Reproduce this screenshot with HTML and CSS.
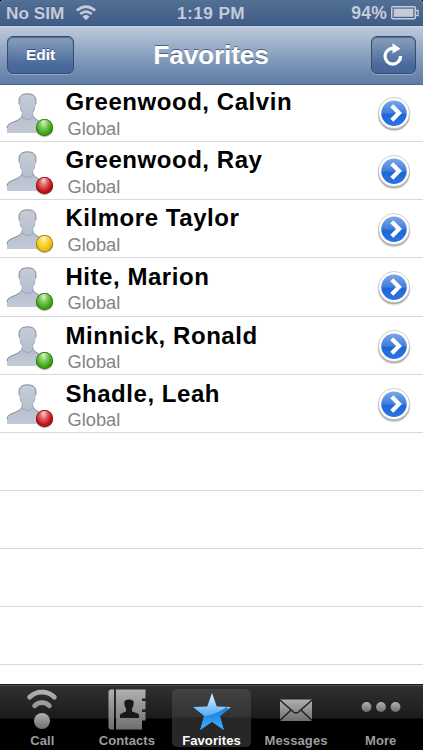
FILE: index.html
```
<!DOCTYPE html>
<html lang="en">
<head>
<meta charset="utf-8">
<title>Favorites</title>
<link rel="stylesheet" href="styles.css">
</head>
<body>
<svg class="defs" width="0" height="0" aria-hidden="true">
  <defs>
    <linearGradient id="body" x1="0" y1="0" x2="0" y2="1"><stop offset="0" stop-color="#c6ccd7"/><stop offset=".6" stop-color="#b7c0cf"/><stop offset="1" stop-color="#c3cad7"/></linearGradient>
    <linearGradient id="blue" x1="0" y1="0" x2="0" y2="1"><stop offset="0" stop-color="#7da7e9"/><stop offset=".5" stop-color="#3f7ddd"/><stop offset=".53" stop-color="#1e66d6"/><stop offset="1" stop-color="#2b74e4"/></linearGradient>
    <linearGradient id="gray" x1="0" y1="0" x2="0" y2="1"><stop offset="0" stop-color="#b0b0b0"/><stop offset="1" stop-color="#6f6f6f"/></linearGradient>
    <linearGradient id="callGray" gradientUnits="userSpaceOnUse" x1="0" y1="0" x2="0" y2="41"><stop offset="0" stop-color="#b5b5b5"/><stop offset="1" stop-color="#707070"/></linearGradient>
    <linearGradient id="star" x1="0" y1="0" x2="0" y2="1"><stop offset="0" stop-color="#e4f3ff"/><stop offset=".5" stop-color="#67b7f5"/><stop offset="1" stop-color="#2a9cf8"/></linearGradient>
    <linearGradient id="starLow" x1="0" y1="0" x2="0" y2="1"><stop offset="0" stop-color="#1578dc"/><stop offset="1" stop-color="#42b8ff"/></linearGradient>
    <clipPath id="starClip"><path d="M19 0 23.8 13.6 38 14 26.8 22.9 30.8 37 19 28.8 7.2 37 11.2 22.9 0 14 14.2 13.6Z"/></clipPath>
    <symbol id="person" viewBox="0 0 40 42">
      <path d="M1 40V35Q1 32 4 30.500L11 27.500Q14.500 26 15.700 23.500L16.500 19.500Q14.500 18 14.200 14.500Q12.700 13.500 13 11L13.200 6Q14 .8 21.500.8Q29 .8 29.800 6L30 11Q30.300 13.500 28.800 14.500Q28.500 18 26.500 19.500L27.300 23.500Q28.500 26 32 27.500L38 31V40Z" fill="url(#body)"/>
      <path d="M1 35Q1 32 4 30.500L11 27.500Q14.500 26 15.700 23.500M27.300 23.500Q28.500 26 32 27.500L38 31M13 11L13.200 6Q14 .8 21.500.8Q29 .8 29.800 6L30 11" fill="none" stroke="#858c98"/>
      <path d="M15.700 23.500 16.500 19.500Q14.500 18 14.200 14.500M27.300 23.500 26.500 19.500Q28.500 18 28.800 14.500M15.700 23.500Q21.500 29.500 27.300 23.500" fill="none" stroke="#929ba9" stroke-width=".8"/>
    </symbol>
    <symbol id="go" viewBox="0 0 36 40">
      <circle cx="18" cy="19.200" r="16.400" fill="#777" opacity=".16"/>
      <circle cx="18" cy="18.400" r="15.900" fill="#555" opacity=".4"/>
      <circle cx="18" cy="17" r="15.600" fill="#fff" stroke="#bbb" stroke-width=".7"/>
      <circle cx="18" cy="17.200" r="12.700" fill="url(#blue)"/>
      <path d="M15.800 9.800 23 17 15.800 24.200" fill="none" stroke="#fff" stroke-width="4.200"/>
    </symbol>
  </defs>
</svg>
<div class="screen">
  <header class="status">
    <span class="carrier">No SIM</span>
    <svg class="wifi" width="22" height="16" viewBox="0 0 22 16"><path d="M1.800 5.500Q11-2.300 20.200 5.500M5.200 9Q11 4.300 16.800 9" fill="none" stroke="currentColor" stroke-width="2.600"/><path d="M7.500 11.500Q11 8.700 14.500 11.500L11 15.300Z" fill="currentColor"/></svg>
    <span class="clock">1:19 PM</span>
    <span class="charge">94%</span>
    <svg class="battery" width="28" height="14" viewBox="0 0 28 14"><rect x=".75" y=".75" width="23.500" height="12" rx="1" fill="none" stroke="currentColor" stroke-width="1.500"/><rect x="2.700" y="2.700" width="19.600" height="8.100" fill="currentColor"/><path d="M24.500 4.500H27V9.500H24.500" fill="none" stroke="currentColor" stroke-width="1.300"/></svg>
  </header>
  <nav class="navbar">
    <button class="btn edit">Edit</button>
    <h1>Favorites</h1>
    <button class="btn refresh" aria-label="Refresh"><svg width="22" height="24" viewBox="0 0 22 24"><path d="M11.500 5.500A7.800 7.800 0 1 0 18.600 13" fill="none" stroke="#fff" stroke-width="3.200"/><path d="M10.500.3 18.500 5.700 10.500 10.500Z" fill="#fff"/></svg></button>
  </nav>
  <main class="list">
    <div class="row"><div class="avatar"><svg width="40" height="42"><use href="#person"/></svg><i class="dot green"></i></div><div class="who"><b>Greenwood, Calvin</b><span>Global</span></div><svg class="go" width="36" height="40"><use href="#go"/></svg></div>
    <div class="row"><div class="avatar"><svg width="40" height="42"><use href="#person"/></svg><i class="dot red"></i></div><div class="who"><b>Greenwood, Ray</b><span>Global</span></div><svg class="go" width="36" height="40"><use href="#go"/></svg></div>
    <div class="row"><div class="avatar"><svg width="40" height="42"><use href="#person"/></svg><i class="dot yellow"></i></div><div class="who"><b>Kilmore Taylor</b><span>Global</span></div><svg class="go" width="36" height="40"><use href="#go"/></svg></div>
    <div class="row"><div class="avatar"><svg width="40" height="42"><use href="#person"/></svg><i class="dot green"></i></div><div class="who low"><b>Hite, Marion</b><span>Global</span></div><svg class="go" width="36" height="40"><use href="#go"/></svg></div>
    <div class="row"><div class="avatar"><svg width="40" height="42"><use href="#person"/></svg><i class="dot green"></i></div><div class="who low"><b>Minnick, Ronald</b><span>Global</span></div><svg class="go" width="36" height="40"><use href="#go"/></svg></div>
    <div class="row"><div class="avatar"><svg width="40" height="42"><use href="#person"/></svg><i class="dot red"></i></div><div class="who low"><b>Shadle, Leah</b><span>Global</span></div><svg class="go" width="36" height="40"><use href="#go"/></svg></div>
    <div class="row"></div><div class="row"></div><div class="row"></div><div class="row"></div>
  </main>
  <footer class="tabs">
    <div class="tab"><svg width="32" height="42" viewBox="0 0 32 42"><g stroke="url(#callGray)" fill="none" stroke-linecap="round" stroke-width="4.800"><path d="M3.600 8.200C10.500 1.500 21.500 1.500 28.400 8.200M8.600 16.800C12.500 12.600 19.500 12.600 23.400 16.800"/></g><circle cx="16" cy="32" r="8" fill="url(#gray)"/></svg><span>Call</span></div>
    <div class="tab"><svg width="38" height="42" viewBox="0 0 38 42"><path d="M3 .5H6V40.500H3Q.500 40.500.5 38V3Q.500.5 3 .5ZM8 .5H37.500V9.500H34V12H37.500V20.500H34V23H37.500V31.500H34V40.500H8Z" fill="url(#gray)"/><path d="M12 29V26.500Q12 24.800 14 24.200L18 22.500V19.500Q16 17 16.300 13.500Q16.500 10.500 21 10.500T25.700 13.500Q26 17 24 19.500V22.500L29 24.200Q31 24.800 31 26.500V29Z" fill="#191919"/></svg><span>Contacts</span></div>
    <div class="tab active"><svg width="40" height="40" viewBox="-1 -1 40 40"><g clip-path="url(#starClip)"><path d="M0 0H38V38H0Z" fill="url(#star)"/><path d="M5 24Q21 23 34 14L40 40H0Z" fill="url(#starLow)"/></g></svg><span>Favorites</span></div>
    <div class="tab"><svg width="32" height="42" viewBox="0 0 32 42"><path d="M0 10.500H32V32H0Z" fill="url(#gray)"/><path d="M0 11 13.500 23Q16 25 18.500 23L32 11M0 31.500 11 21M32 31.500 21 21" fill="none" stroke="#222" stroke-width="1.500"/></svg><span>Messages</span></div>
    <div class="tab"><svg width="40" height="42" viewBox="0 0 40 42"><g fill="url(#gray)"><circle cx="5.500" cy="18" r="4.900"/><circle cx="20" cy="18" r="4.900"/><circle cx="34.500" cy="18" r="4.900"/></g></svg><span>More</span></div>
  </footer>
</div>
</body>
</html>
```
FILE: styles.css
```
* { box-sizing: border-box; }
body { margin: 0; background: #000; font-family: "Liberation Sans", Arial, sans-serif; }
svg { display: block; flex: none; }
.defs { position: absolute; }
.screen { width: 423px; height: 750px; overflow: hidden; display: flex; flex-direction: column; background: #fff; }

.status { height: 26px; flex: none; display: grid; grid-template-columns: 70px 107px 1fr auto auto; align-items: center; padding: 1px 4px 0 6px; font-size: 17.200px; line-height: 24px; font-weight: bold; color: #c5ccd8; background: linear-gradient(#526f94, #3f5d87); border-radius: 4px 4px 0 0; box-shadow: 0 -4px 0 4px #000; border-bottom: 1px solid #35527c; }
.carrier { text-shadow: 0 -1px 0 #3d5878; }
.wifi { margin: 0 0 0 -1px; }
.clock { margin-left: -6px; letter-spacing: .45px; }
.charge { font-size: 17.500px; letter-spacing: .2px; margin-right: 4px; }
.battery { margin-top: -1px; }

.navbar { height: 59px; flex: none; display: flex; justify-content: space-between; align-items: flex-start; padding: 9px 7px 0; background: linear-gradient(#becadb, #8ea4c1 45%, #6e89ae 80%, #5e7ca5); border-top: 1px solid #d0dae7; border-bottom: 1px solid #56688a; }
.btn { height: 38px; padding: 0; border: 1px solid #374d70; border-radius: 6px; color: #fff; font: bold 15.500px/34px "Liberation Sans", Arial, sans-serif; text-shadow: 0 -1px 0 #36527d; background: linear-gradient(#8a9fbe, #6581a9 45%, #4b6b9c 75%, #456699); box-shadow: inset 0 1px 1px #526a8d, 0 1px 0 #93a9c5; display: flex; align-items: center; justify-content: center; }
.edit { width: 67px; letter-spacing: -.1px; padding-bottom: 1px; }
.refresh { width: 45px; padding-bottom: 1px; }
h1 { margin: 2px 0 0 -23px; font-size: 26.500px; line-height: 35px; color: #fff; text-shadow: 0 -1px 0 #4a607f; letter-spacing: -.25px; }

.list { flex: 1; min-height: 0; overflow: hidden; margin-top: -1px; }
.row { height: 58.150px; display: flex; align-items: flex-start; border-bottom: 1px solid #d9d9d9; padding: 0 11px 0 6px; }
.avatar { position: relative; width: 60px; padding-top: 9px; }
.dot { position: absolute; left: 30px; top: 35px; width: 17px; height: 17px; border-radius: 50%; }
.green { background: radial-gradient(ellipse at 45% 22%, #d6f4c4 0, #8cd06b 25%, #40a716 58%, #2d7e0e 100%); box-shadow: inset 0 0 0 .7px #296f10, 0 1px 1px #aaa; }
.red { background: radial-gradient(ellipse at 45% 22%, #ffd0d0 0, #e37070 25%, #c71318 58%, #8e0508 100%); box-shadow: inset 0 0 0 .7px #7b1011, 0 1px 1px #aaa; }
.yellow { background: radial-gradient(ellipse at 45% 22%, #fff8c4 0, #f6de57 25%, #efc30c 58%, #b98b06 100%); box-shadow: inset 0 0 0 .7px #92730f, 0 1px 1px #aaa; }
.who { flex: 1; display: flex; flex-direction: column; white-space: nowrap; }
.who b { font-size: 24px; line-height: 28px; padding-top: 4px; letter-spacing: .55px; color: #000; margin-left: -.6px; }
.who span { font-size: 18.300px; line-height: 21px; padding-top: 2px; margin-left: 1.500px; color: #848484; }
.low b { padding-top: 5px; }
.low span { padding-top: 1px; }
.go { margin-top: 12px; }

.tabs { height: 65px; flex: none; display: grid; grid-template-columns: 1fr 1fr 1fr 1fr 1fr; background: linear-gradient(#303030, #1b1b1b 32px, #000 33px); border-top: 1px solid #505050; box-shadow: 0 -1px 0 #171717; padding-top: 3px; }
.tab { display: flex; flex-direction: column; align-items: center; height: 58px; font-size: 13px; font-weight: bold; color: #9d9d9d; margin: 0 3px; border-radius: 5px; letter-spacing: .1px; }
.tab svg { height: 42px; }
.tab span { line-height: 15px; margin-top: 2px; }
.active { color: #fff; background: linear-gradient(#414141, #333 28px, #272727 29px, #272727); }
.active svg { height: 40px; margin: 3px 0 -1px 1px; }
```
